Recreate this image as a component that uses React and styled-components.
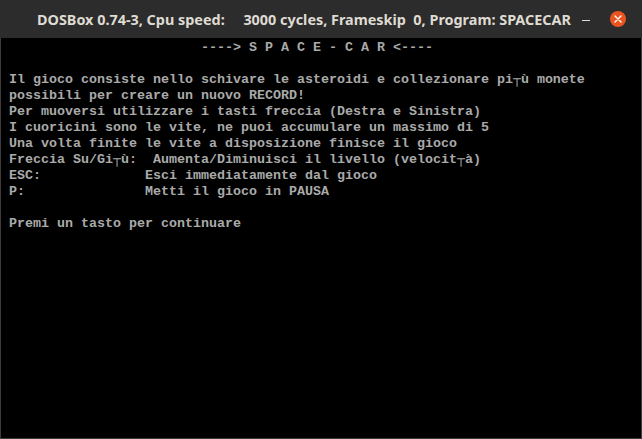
import React from "react";
import styled, { createGlobalStyle } from "styled-components";

const Global = createGlobalStyle`
  html, body { margin: 0; padding: 0; background: #2b2b2b; }
  body { width: 642px; height: 439px; overflow: hidden; }
`;

const Window = styled.div`
  width: 642px;
  height: 439px;
  display: flex;
  flex-direction: column;
  background: #2b2b2b;
  border-radius: 6px 6px 0 0;
  overflow: hidden;
`;

const TitleBar = styled.div`
  height: 38px;
  flex: 0 0 38px;
  display: flex;
  align-items: center;
  background: #2c2c2c;
  padding-left: 37px;
  box-sizing: border-box;
`;

const Title = styled.div`
  flex: 0 0 auto;
  font-family: "Noto Sans", "Open Sans", sans-serif;
  font-weight: 700;
  font-size: 14.4px;
  color: #dfdbd2;
  white-space: pre;
  margin-top: 1px;
`;

const Minimize = styled.div`
  flex: 0 0 8px;
  width: 8px;
  height: 1px;
  background: #dfdbd2;
  margin-left: 11px;
  margin-top: 3px;
`;

const CloseBtn = styled.div`
  flex: 0 0 16px;
  width: 16px;
  height: 16px;
  border-radius: 50%;
  background: #e95420;
  margin-left: 20px;
  display: flex;
  align-items: center;
  justify-content: center;
`;

const Screen = styled.div`
  flex: 1;
  background: #000;
  border: 1px solid #3c3c3c;
  border-top: none;
  overflow: hidden;
`;

const TextMode = styled.pre`
  margin: 0;
  padding-top: 2px;
  font-family: "Liberation Mono", "DejaVu Sans Mono", monospace;
  font-size: 13.333px;
  line-height: 16px;
  color: #aaaaaa;
  font-weight: 700;
`;

const Line = styled.div`
  height: 16px;
  white-space: pre;
`;

const lines = [
  "                         ----> S P A C E - C A R <----",
  "",
  " Il gioco consiste nello schivare le asteroidi e collezionare pi┬ù monete",
  " possibili per creare un nuovo RECORD!",
  " Per muoversi utilizzare i tasti freccia (Destra e Sinistra)",
  " I cuoricini sono le vite, ne puoi accumulare un massimo di 5",
  " Una volta finite le vite a disposizione finisce il gioco",
  " Freccia Su/Gi┬ù:  Aumenta/Diminuisci il livello (velocit┬à)",
  " ESC:             Esci immediatamente dal gioco",
  " P:               Metti il gioco in PAUSA",
  "",
  " Premi un tasto per continuare",
];

export default function App() {
  return (
    <>
      <Global />
      <Window>
        <TitleBar>
          <Title>{"DOSBox 0.74-3, Cpu speed:     3000 cycles, Frameskip  0, Program: SPACECAR"}</Title>
          <Minimize />
          <CloseBtn>
            <svg width="8" height="8" viewBox="0 0 8 8">
              <path d="M1 1 L7 7 M7 1 L1 7" stroke="#fff" strokeWidth="1.4" strokeLinecap="round" />
            </svg>
          </CloseBtn>
        </TitleBar>
        <Screen>
          <TextMode>
            {lines.map((l, i) => (
              <Line key={i}>{l}</Line>
            ))}
          </TextMode>
        </Screen>
      </Window>
    </>
  );
}
